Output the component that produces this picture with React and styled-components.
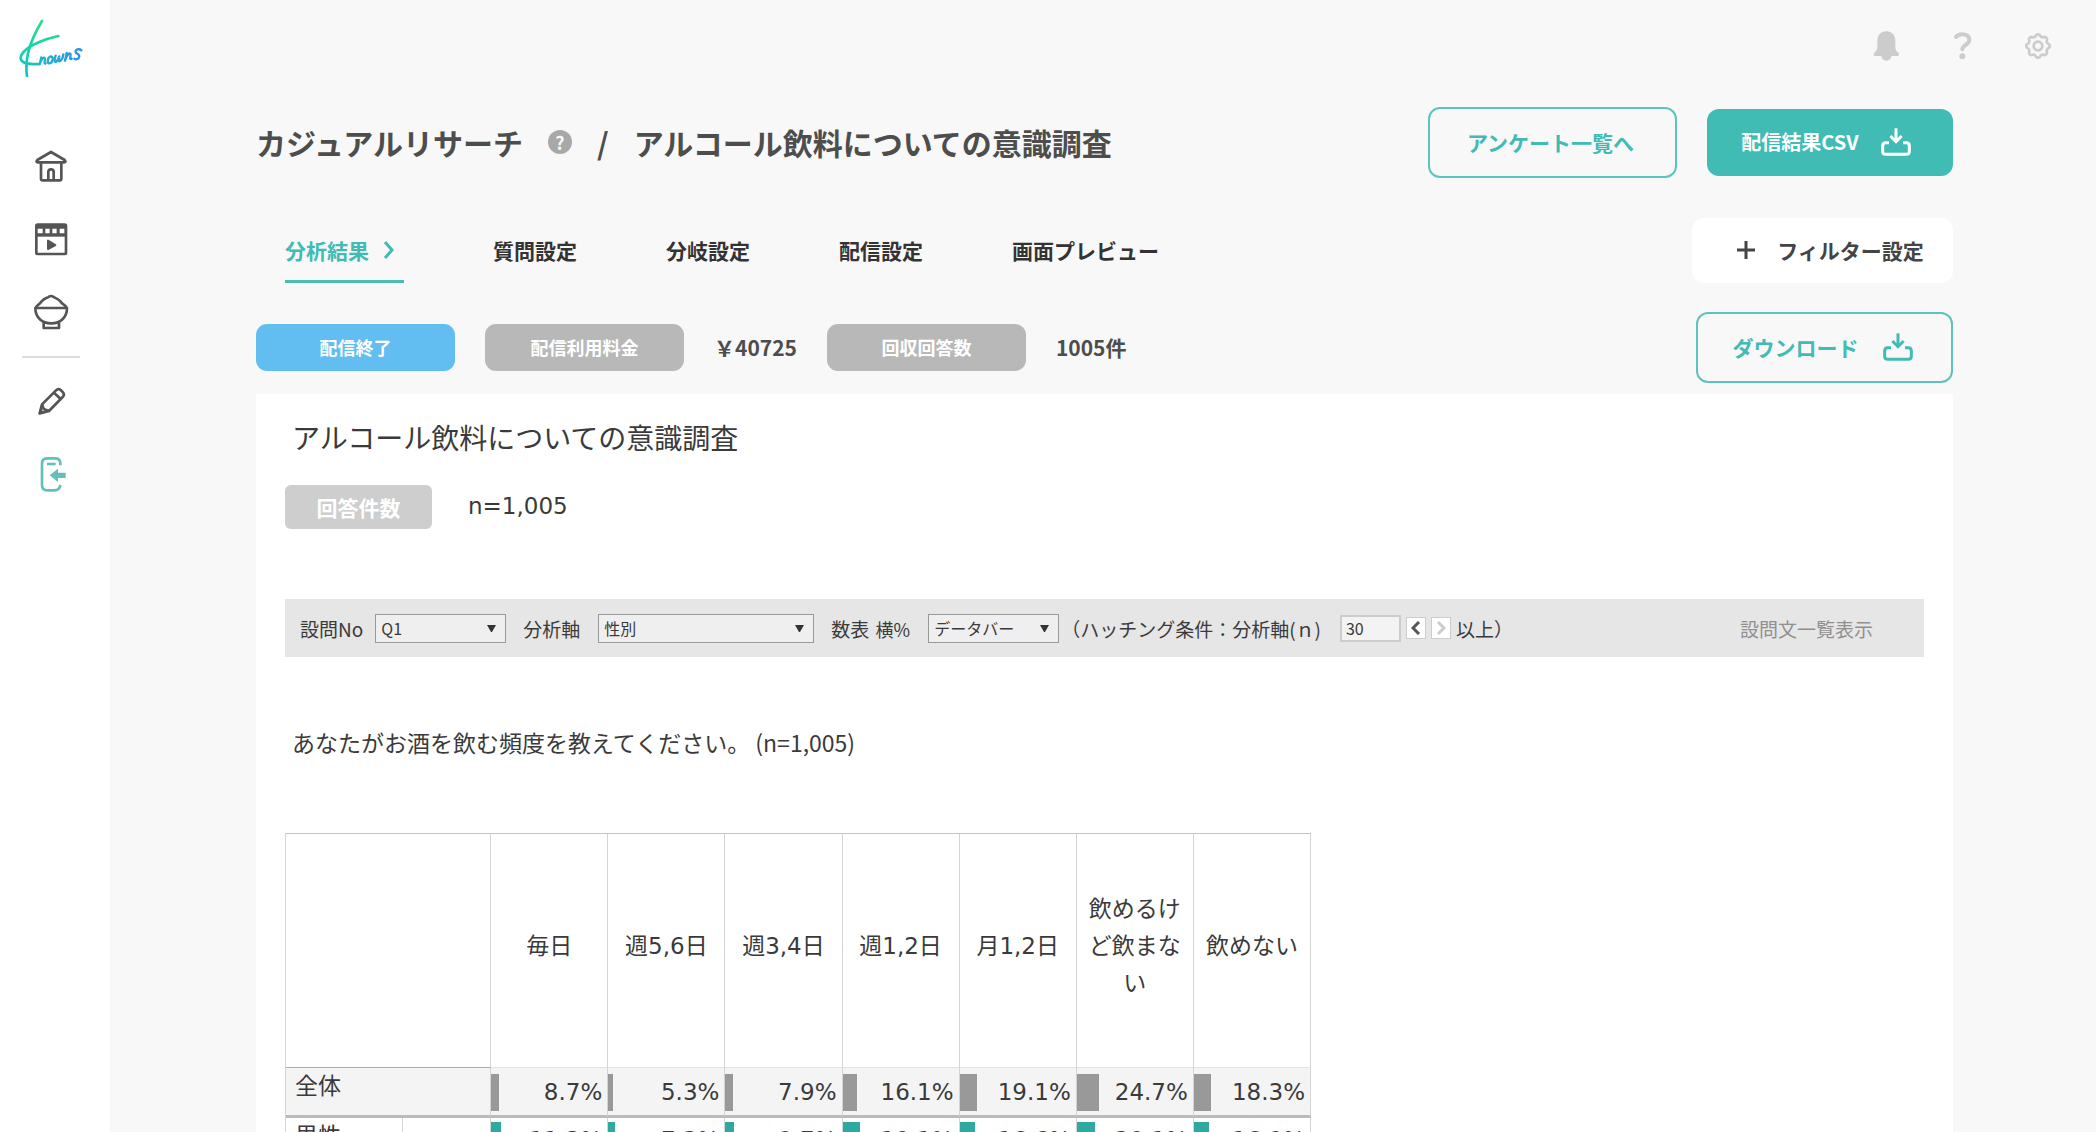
import React from "react";
import styled, { createGlobalStyle } from "styled-components";

const columns = [
  "毎日",
  "週5,6日",
  "週3,4日",
  "週1,2日",
  "月1,2日",
  "飲めるけど飲まない",
  "飲めない",
];

const totalRow = [8.7, 5.3, 7.9, 16.1, 19.1, 24.7, 18.3];
const maleRow = [11.3, 7.3, 9.7, 19.1, 16.6, 20.1, 16.9];

const tabs = ["質問設定", "分岐設定", "配信設定", "画面プレビュー"];

const getGearPath = () => {
  const points = [];
  for (let i = 0; i < 96; i++) {
    const angle = (i / 96) * Math.PI * 2;
    const wave = Math.tanh(2 * Math.cos(angle * 8));
    const radius = 32 + 3 * wave;
    const x = 45 + radius * Math.cos(angle);
    const y = 45 + radius * Math.sin(angle);
    points.push(`${x.toFixed(1)} ${y.toFixed(1)}`);
  }
  return `M${points.join("L")}Z`;
};

const Logo = () => (
  <svg width="64" height="60" viewBox="30 27 192 180" fill="none">
    <defs>
      <linearGradient id="stem" x1="0" y1="30" x2="0" y2="200" gradientUnits="userSpaceOnUse">
        <stop offset="0" stopColor="#27e08c" />
        <stop offset="1" stopColor="#12bfc9" />
      </linearGradient>
      <linearGradient id="name" x1="90" y1="0" x2="218" y2="0" gradientUnits="userSpaceOnUse">
        <stop offset="0" stopColor="#1cb9cd" />
        <stop offset="1" stopColor="#2f8fe4" />
      </linearGradient>
    </defs>
    <g stroke="url(#stem)" strokeWidth="8" strokeLinecap="round">
      <path d="M99 33C80 64 65 96 57 130C52 155 51 180 54 198" />
      <path d="M148 78C112 86 62 104 42 128C27 147 38 158 60 161C74 163 82 163 90 162" />
    </g>
    <g stroke="url(#name)" strokeWidth="7" strokeLinecap="round" strokeLinejoin="round">
      <path d="M97 142L92 163C97 149 103 140 107 144C111 148 102 163 110 160" />
      <path d="M126 139C116 141 113 157 120 160C130 161 136 143 126 139Z" />
      <path d="M140 137C135 151 136 158 142 155C147 151 149 144 151 139C147 151 149 157 155 152C160 147 163 140 163 133" />
      <path d="M173 129L168 152C171 140 179 128 184 131C188 135 178 152 188 146" />
      <path d="M217 121C211 115 199 118 200 126C201 132 212 131 211 139C210 147 202 150 196 146" />
    </g>
  </svg>
);

const HomeIcon = () => (
  <svg width="36" height="36" viewBox="0 0 108 108" fill="none" stroke="#555" strokeWidth="8" strokeLinejoin="round">
    <path d="M54 12L13 36Q7 43 15 43H93Q101 43 95 36Z" />
    <path d="M24 44V92Q24 97 29 97H80Q85 97 85 92V44" />
    <path d="M46 97V72Q46 64 54 64Q62 64 62 72V97" />
  </svg>
);

const MovieIcon = () => (
  <svg width="36" height="36" viewBox="0 0 108 108">
    <rect x="10" y="11" width="89" height="88" rx="4" fill="none" stroke="#555" strokeWidth="8" />
    <path d="M8 11H100V47H8Z" fill="#555" />
    <path d="M14 23H29V37H14ZM37 23H50V37H37ZM58 23H71V37H58ZM80 23H94V37H80Z" fill="#fff" />
    <path d="M45 59V84L67 72Z" fill="#555" stroke="#555" strokeWidth="6" strokeLinejoin="round" />
  </svg>
);

const BowlIcon = () => (
  <svg width="36" height="36" viewBox="0 0 108 108" fill="none" stroke="#555" strokeWidth="8" strokeLinejoin="round">
    <path d="M8 40C16 32 22 28 26 22C34 12 43 12 48 8Q54 4 60 8C66 12 76 14 82 22C88 30 94 32 101 40" />
    <path d="M7 42H102C102 70 82 88 55 88C27 88 7 70 7 42Z" />
    <path d="M32 86V102H78V86" />
  </svg>
);

const PencilIcon = () => (
  <svg width="36" height="36" viewBox="0 0 108 108" fill="none" stroke="#555" strokeWidth="8" strokeLinejoin="round">
    <path d="M20 91L27 64L69 22Q76 15 83 21L90 28Q96 35 89 42L48 84Z" />
    <path d="M63 29L83 48" />
    <path d="M27 64L32 78L48 84" />
    <path d="M18 93L22 78L34 89Z" fill="#555" strokeWidth="2" />
  </svg>
);

const PhoneIcon = () => (
  <svg width="36" height="36" viewBox="0 0 108 108" fill="none" stroke="#62bfba" strokeWidth="8">
    <path d="M82 28V20Q80 7 66 7H43Q27 7 27 23V88Q27 103 43 103H64Q80 103 82 87" />
    <path d="M42 24H68" />
    <path d="M50 58L75 38V50H98V66H75V78Z" fill="#62bfba" stroke="none" />
  </svg>
);

const BellIcon = () => (
  <svg width="30" height="30" viewBox="0 0 90 90" fill="#ccc">
    <path d="M46 1C28 1 19 14 19 30V48C19 60 12 62 8 68Q6 74 12 75H30Q34 89 46 89Q58 89 62 75H80Q86 74 84 68C80 62 73 60 73 48V30C73 14 64 1 46 1Z" />
  </svg>
);

const HelpIcon = () => (
  <svg width="30" height="30" viewBox="0 0 90 90" fill="none" stroke="#ccc" strokeWidth="12" strokeLinecap="round">
    <path d="M27 18C36 6 67 6 67 27C67 41 46 42 46 55" />
    <circle cx="46" cy="76" r="9" fill="#ccc" stroke="none" />
  </svg>
);

const GearIcon = () => (
  <svg width="30" height="30" viewBox="0 0 90 90" fill="none" stroke="#ccc" strokeWidth="8" strokeLinejoin="round">
    <path d={getGearPath()} />
    <circle cx="45" cy="45" r="13" />
  </svg>
);

const DownloadIcon = () => (
  <svg width="30" height="28" viewBox="0 0 90 84" fill="none" stroke="currentColor" strokeWidth="9">
    <path d="M24 44H14Q5 44 5 54V70Q5 79 14 79H76Q85 79 85 70V54Q85 44 76 44H66" />
    <path d="M45 1V40" />
    <path d="M28 24L45 41L62 24" />
  </svg>
);

const ChevronIcon = ({ size, left }) => (
  <svg width={size} height={size * 2} viewBox="0 0 10 20" fill="none" stroke="currentColor" strokeWidth="3">
    <path d={left ? "M9 2L2 10L9 18" : "M1 2L8 10L1 18"} />
  </svg>
);

const StepIcon = ({ left }) => (
  <svg width="10" height="14" viewBox="0 0 10 14" fill="none" stroke="currentColor" strokeWidth="3">
    <path d={left ? "M8 1L2 7L8 13" : "M2 1L8 7L2 13"} />
  </svg>
);

const SelectBox = ({ id, value, width }) => (
  <SelectWrapper $width={width}>
    <select id={id} defaultValue={value}>
      <option>{value}</option>
    </select>
    <svg width="9" height="7" viewBox="0 0 9 7">
      <path d="M0 0H9L5 7H4Z" fill="#333" />
    </svg>
  </SelectWrapper>
);

const DataCells = ({ values, color }) =>
  values.map((value, index) => (
    <DataCell key={columns[index]}>
      <BarRow>
        <Bar $color={color} style={{ width: `${value * 0.82}%` }} />
        <span>{value.toFixed(1)}%</span>
      </BarRow>
    </DataCell>
  ));

const App = () => {
  return (
    <Page>
      <GlobalStyle />
      <Sidebar>
        <LogoLink href="#" aria-label="Knowns">
          <Logo />
        </LogoLink>
        <SideNav>
          <a href="#home" aria-label="ホーム"><HomeIcon /></a>
          <a href="#movie" aria-label="動画"><MovieIcon /></a>
          <a href="#food" aria-label="食卓"><BowlIcon /></a>
        </SideNav>
        <Divider />
        <SideNav>
          <a href="#edit" aria-label="編集"><PencilIcon /></a>
          <a href="#research" aria-label="リサーチ"><PhoneIcon /></a>
        </SideNav>
      </Sidebar>

      <Main>
        <TopBar>
          <IconButton aria-label="お知らせ"><BellIcon /></IconButton>
          <IconButton aria-label="ヘルプ"><HelpIcon /></IconButton>
          <IconButton aria-label="設定"><GearIcon /></IconButton>
        </TopBar>

        <Content>
          <TitleRow>
            <PageTitle>
              <span>カジュアルリサーチ</span>
              <HelpBadge aria-label="説明">?</HelpBadge>
              <span>/</span>
              <span>アルコール飲料についての意識調査</span>
            </PageTitle>
            <Actions>
              <OutlineButton $width={249}>アンケート一覧へ</OutlineButton>
              <CsvButton>
                配信結果CSV
                <DownloadIcon />
              </CsvButton>
            </Actions>
          </TitleRow>

          <TabRow>
            <Tabs>
              <Tab href="#result" $active>
                分析結果
                <ChevronIcon size={10} />
              </Tab>
              {tabs.map((tab) => (
                <Tab key={tab} href="#tab">
                  {tab}
                </Tab>
              ))}
            </Tabs>
            <FilterButton>
              <svg width="18" height="18" viewBox="0 0 18 18" stroke="#444" strokeWidth="3">
                <path d="M9 0V18M0 9H18" />
              </svg>
              フィルター設定
            </FilterButton>
          </TabRow>

          <StatusRow>
            <Statuses>
              <Pill $color="#62bdf1">配信終了</Pill>
              <Pill>配信利用料金</Pill>
              <Amount>￥40725</Amount>
              <Pill>回収回答数</Pill>
              <Amount>1005件</Amount>
            </Statuses>
            <OutlineButton $width={257}>
              ダウンロード
              <DownloadIcon />
            </OutlineButton>
          </StatusRow>

          <Panel>
            <PanelTitle>アルコール飲料についての意識調査</PanelTitle>
            <CountRow>
              <CountBadge>回答件数</CountBadge>
              <Amount>n=1,005</Amount>
            </CountRow>

            <Toolbar>
              <Field $gap={12}>
                <label htmlFor="question">設問No</label>
                <SelectBox id="question" value="Q1" width={131} />
              </Field>
              <Field $gap={18}>
                <label htmlFor="axis">分析軸</label>
                <SelectBox id="axis" value="性別" width={216} />
              </Field>
              <Field $gap={18}>
                <label htmlFor="display">
                  数表 <small>横%</small>
                </label>
                <SelectBox id="display" value="データバー" width={131} />
              </Field>
              <Condition>
                <label htmlFor="minimum">（ハッチング条件：分析軸(ｎ)</label>
                <NumberInput id="minimum" defaultValue="30" />
                <StepButton aria-label="減らす">
                  <StepIcon left />
                </StepButton>
                <StepButton aria-label="増やす" $muted>
                  <StepIcon />
                </StepButton>
                <span>以上）</span>
              </Condition>
              <ListLink href="#questions">設問文一覧表示</ListLink>
            </Toolbar>

            <Question>あなたがお酒を飲む頻度を教えてください。 (n=1,005)</Question>

            <Table>
              <colgroup>
                <col width="117" />
                <col width="88" />
                {columns.map((column) => (
                  <col key={column} width="117" />
                ))}
              </colgroup>
              <thead>
                <HeadRow>
                  <th colSpan="2" aria-label="分析軸" />
                  {columns.map((column) => (
                    <th key={column} scope="col">{column}</th>
                  ))}
                </HeadRow>
              </thead>
              <tbody>
                <TotalRow>
                  <LabelCell colSpan="2" scope="row">全体</LabelCell>
                  <DataCells values={totalRow} color="#999" />
                </TotalRow>
                <tr>
                  <LabelCell scope="row">男性</LabelCell>
                  <CountCell>1,005</CountCell>
                  <DataCells values={maleRow} color="#2fa9a0" />
                </tr>
              </tbody>
            </Table>
          </Panel>
        </Content>
      </Main>
    </Page>
  );
};

const GlobalStyle = createGlobalStyle`
  * {
    box-sizing: border-box;
  }
  body {
    margin: 0;
    background: #f8f8f8;
    color: #3a3a3a;
    font-family: "Noto Sans CJK JP", sans-serif;
  }
  a {
    color: inherit;
    text-decoration: none;
  }
  button, input, select {
    font-family: inherit;
    color: inherit;
  }
  button {
    cursor: pointer;
  }
  svg {
    display: block;
    flex: none;
  }
`;

const Page = styled.div`
  display: flex;
  height: 100vh;
`;

const Sidebar = styled.aside`
  flex: none;
  display: flex;
  flex-direction: column;
  align-items: center;
  width: 110px;
  padding: 19px 8px 0 0;
  background: #fff;
`;

const LogoLink = styled.a`
  margin-bottom: 69px;
`;

const SideNav = styled.nav`
  display: flex;
  flex-direction: column;
  gap: 37px;
`;

const Divider = styled.hr`
  width: 58px;
  height: 2px;
  margin: 26px 0 25px;
  border: none;
  background: #dcdcdc;
`;

const Main = styled.main`
  flex: 1;
  min-width: 0;
  overflow-y: auto;
  scrollbar-width: none;
`;

const TopBar = styled.header`
  display: flex;
  justify-content: flex-end;
  gap: 46px;
  padding: 31px 43px 46px;
`;

const IconButton = styled.button`
  padding: 0;
  border: none;
  background: none;
`;

const Content = styled.div`
  padding: 0 143px 0 146px;
`;

const TitleRow = styled.div`
  display: flex;
  align-items: center;
  justify-content: space-between;
  margin-bottom: 40px;
`;

const PageTitle = styled.h1`
  display: flex;
  align-items: center;
  gap: 25px;
  margin: 0;
  padding-bottom: 2px;
  color: #4d4d4d;
  font-size: 30px;
  line-height: 44px;
`;

const HelpBadge = styled.button`
  width: 24px;
  height: 24px;
  padding: 0;
  border: none;
  border-radius: 50%;
  background: #a8a8a8;
  color: #f8f8f8;
  font-size: 18px;
  font-weight: bold;
  line-height: 24px;
`;

const Actions = styled.div`
  display: flex;
  align-items: center;
  gap: 30px;
`;

const Button = styled.button`
  display: flex;
  align-items: center;
  justify-content: center;
  border-radius: 12px;
  font-size: 21px;
  font-weight: bold;
`;

const OutlineButton = styled(Button)`
  width: ${(props) => props.$width}px;
  height: 71px;
  gap: 24px;
  padding: 0 4px 2px 0;
  border: 2px solid #5cc3bd;
  background: none;
  color: #41bbb4;
`;

const CsvButton = styled(Button)`
  width: 246px;
  height: 67px;
  gap: 22px;
  padding: 0 8px 2px 0;
  border: none;
  background: #41bcb5;
  color: #fff;
  font-size: 20px;
`;

const FilterButton = styled(Button)`
  width: 261px;
  height: 65px;
  gap: 22px;
  padding: 0 0 2px 16px;
  border: none;
  background: #fff;
  color: #444;
`;

const TabRow = styled.div`
  display: flex;
  align-items: flex-end;
  justify-content: space-between;
  margin-bottom: 29px;
`;

const Tabs = styled.nav`
  display: flex;
  gap: 89px;
  padding-left: 29px;
`;

const Tab = styled.a`
  display: flex;
  align-items: center;
  gap: 15px;
  padding: 0 ${(props) => (props.$active ? 10 : 0)}px 15px 0;
  border-bottom: 3px solid ${(props) => (props.$active ? "#4bbdb5" : "transparent")};
  color: ${(props) => (props.$active ? "#41bbb4" : "#333")};
  font-size: 21px;
  font-weight: bold;
  line-height: 30px;
`;

const StatusRow = styled.div`
  display: flex;
  align-items: center;
  justify-content: space-between;
  margin-bottom: 11px;
`;

const Statuses = styled.div`
  display: flex;
  align-items: center;
  gap: 30px;
  color: #4d4d4d;
  font-size: 21px;
  font-weight: bold;
`;

const Amount = styled.span`
  padding-bottom: 2px;
`;

const Pill = styled.span`
  width: 199px;
  border-radius: 11px;
  background: ${(props) => props.$color || "#b8b8b8"};
  color: #fff;
  font-size: 18px;
  line-height: 47px;
  text-align: center;
`;

const Panel = styled.section`
  padding: 22px 29px 40px;
  background: #fff;
`;

const PanelTitle = styled.h2`
  margin: 0 0 27px;
  padding-left: 7px;
  font-size: 28px;
  font-weight: normal;
  line-height: 42px;
`;

const CountRow = styled.div`
  display: flex;
  align-items: center;
  gap: 36px;
  margin-bottom: 70px;
  font-family: "DejaVu Sans", sans-serif;
  font-size: 23px;
`;

const CountBadge = styled.span`
  width: 147px;
  border-radius: 6px;
  background: #cecece;
  color: #fff;
  font-family: "Noto Sans CJK JP", sans-serif;
  font-size: 21px;
  font-weight: bold;
  line-height: 44px;
  text-align: center;
`;

const Toolbar = styled.div`
  display: flex;
  align-items: center;
  gap: 17px;
  height: 58px;
  margin-bottom: 67px;
  padding: 0 51px 0 15px;
  background: #e6e6e6;
  font-size: 19px;
  white-space: nowrap;
`;

const Field = styled.div`
  display: flex;
  align-items: center;
  gap: ${(props) => props.$gap}px;

  small {
    margin-left: 2px;
    font-size: 18px;
  }
`;

const SelectWrapper = styled.div`
  position: relative;
  width: ${(props) => props.$width}px;

  select {
    display: block;
    width: 100%;
    height: 29px;
    padding: 0 5px;
    border: 1px solid #999;
    border-radius: 0;
    background: #efefef;
    appearance: none;
    font-size: 16px;
  }
  svg {
    position: absolute;
    top: 11px;
    right: 10px;
    pointer-events: none;
  }
`;

const Condition = styled.div`
  display: flex;
  align-items: center;
  gap: 5px;
  margin-left: -15px;
`;

const NumberInput = styled.input`
  width: 61px;
  height: 27px;
  margin-left: 14px;
  padding: 0 4px;
  border: 2px solid #ccc;
  background: #f3f3f3;
  font-size: 16px;
`;

const StepButton = styled.button`
  display: flex;
  align-items: center;
  justify-content: center;
  width: 20px;
  height: 22px;
  padding: 0;
  border: 1px solid #ccc;
  background: #fff;
  color: ${(props) => (props.$muted ? "#ccc" : "#555")};
`;

const ListLink = styled.a`
  margin-left: auto;
  color: #909090;
`;

const Question = styled.p`
  margin: 0 0 73px;
  padding-left: 7px;
  font-size: 23px;
  line-height: 36px;
`;

const Table = styled.table`
  width: 1026px;
  table-layout: fixed;
  border-spacing: 0;
  border-top: 1px solid #c4c4c4;
  border-left: 1px solid #d4d4d4;
  font-family: "DejaVu Sans", "Noto Sans CJK JP", sans-serif;
  font-size: 23px;
  line-height: 37px;

  th, td {
    padding: 0;
    border-right: 1px solid #d4d4d4;
    font-weight: normal;
  }
`;

const HeadRow = styled.tr`
  height: 234px;

  th {
    padding: 0 8px 8px;
    border-bottom: 1px solid #e2e2e2;
  }
  th:first-child {
    border-bottom-color: #aaa;
  }
`;

const LabelCell = styled.th`
  && {
    padding-left: 9px;
  }
  line-height: 36px;
  text-align: left;
  vertical-align: top;
`;

const CountCell = styled.td`
  && {
    padding: 4px 3px 0 0;
  }
  font-size: 20px;
  line-height: 34px;
  text-align: right;
  vertical-align: top;
`;

const DataCell = styled.td`
  && {
    padding-top: 4px;
  }
  height: 49px;
  vertical-align: top;
`;

const TotalRow = styled.tr`
  background: #f4f4f4;

  th, td {
    border-bottom: 3px solid #bbb;
  }
  ${DataCell}${DataCell} {
    height: 50px;
    padding-top: 6px;
  }
`;

const BarRow = styled.div`
  display: flex;
  justify-content: space-between;
  padding-right: 5px;
`;

const Bar = styled.span`
  flex: none;
  background: ${(props) => props.$color};
`;

export default App;
